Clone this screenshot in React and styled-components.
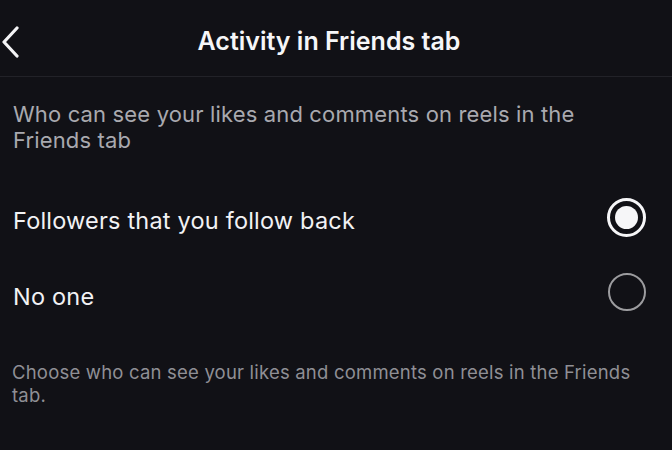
import React, { useState } from 'react'
import styled, { createGlobalStyle } from 'styled-components'

const GlobalStyle = createGlobalStyle`
  html, body {
    margin: 0;
    padding: 0;
    background: #111116;
  }
  body {
    font-family: Inter, "Noto Sans", "Liberation Sans", sans-serif;
    -webkit-font-smoothing: antialiased;
  }
`

const options = [
  { id: 'followers', label: 'Followers that you follow back' },
  { id: 'none', label: 'No one' },
]

function BackIcon() {
  return (
    <svg width="22" height="32" viewBox="0 0 22 32" fill="none">
      <path d="M15 2 L2 16 L15 30" stroke="#f4f4f6" strokeWidth="3.2" strokeLinecap="round" strokeLinejoin="round" />
    </svg>
  )
}

function App() {
  const [selected, setSelected] = useState('followers')
  return (
    <Page>
      <GlobalStyle />
      <Header>
        <BackButton>
          <BackIcon />
        </BackButton>
        <Title>Activity in Friends tab</Title>
        <span />
      </Header>
      <Intro>Who can see your likes and comments on reels in the Friends tab</Intro>
      <OptionList>
        {options.map(o => (
          <OptionRow key={o.id} onClick={() => setSelected(o.id)}>
            <OptionLabel>{o.label}</OptionLabel>
            <Radio $checked={selected === o.id} />
          </OptionRow>
        ))}
      </OptionList>
      <Footnote>Choose who can see your likes and comments on reels in the Friends tab.</Footnote>
    </Page>
  )
}

export default App

const Page = styled.div`
  width: 672px;
  height: 450px;
  background: #111116;
  overflow: hidden;
`

const Header = styled.header`
  display: grid;
  grid-template-columns: 26px 1fr 40px;
  align-items: center;
  height: 68px;
  padding-top: 8px;
  border-bottom: 1px solid #222228;
`

const BackButton = styled.button`
  display: flex;
  align-items: center;
  padding: 0 0 0 2px;
  border: none;
  background: transparent;
  cursor: pointer;
`

const Title = styled.h1`
  margin: 0 0 2px;
  text-align: center;
  color: #f6f6f8;
  font-size: 25px;
  font-weight: 600;
`

const Intro = styled.p`
  margin: 0;
  padding: 24px 59px 0 13px;
  color: #a9a9af;
  font-size: 22px;
  line-height: 26px;
  letter-spacing: 0.15px;
`

const OptionList = styled.div`
  display: flex;
  flex-direction: column;
  margin-top: 29px;
`

const OptionRow = styled.div`
  display: flex;
  align-items: center;
  justify-content: space-between;
  height: 76px;
  padding: 0 26px 0 13px;
  cursor: pointer;
`

const OptionLabel = styled.span`
  color: #f2f2f4;
  font-size: 23.5px;
  letter-spacing: 0.2px;
`

const Radio = styled.span`
  position: relative;
  box-sizing: border-box;
  width: ${p => (p.$checked ? '39px' : '38px')};
  height: ${p => (p.$checked ? '39px' : '38px')};
  margin-bottom: ${p => (p.$checked ? '5px' : '9px')};
  border-radius: 50%;
  border: ${p => (p.$checked ? '3px solid #f6f6f8' : '2.5px solid #9c9c9f')};

  &::after {
    content: '';
    display: ${p => (p.$checked ? 'block' : 'none')};
    position: absolute;
    inset: 5px;
    border-radius: 50%;
    background: #f6f6f8;
  }
`

const Footnote = styled.p`
  margin: 0;
  padding: 27px 30px 0 12px;
  color: #8f8f95;
  font-size: 18.5px;
  line-height: 23px;
  letter-spacing: 0.2px;
`
